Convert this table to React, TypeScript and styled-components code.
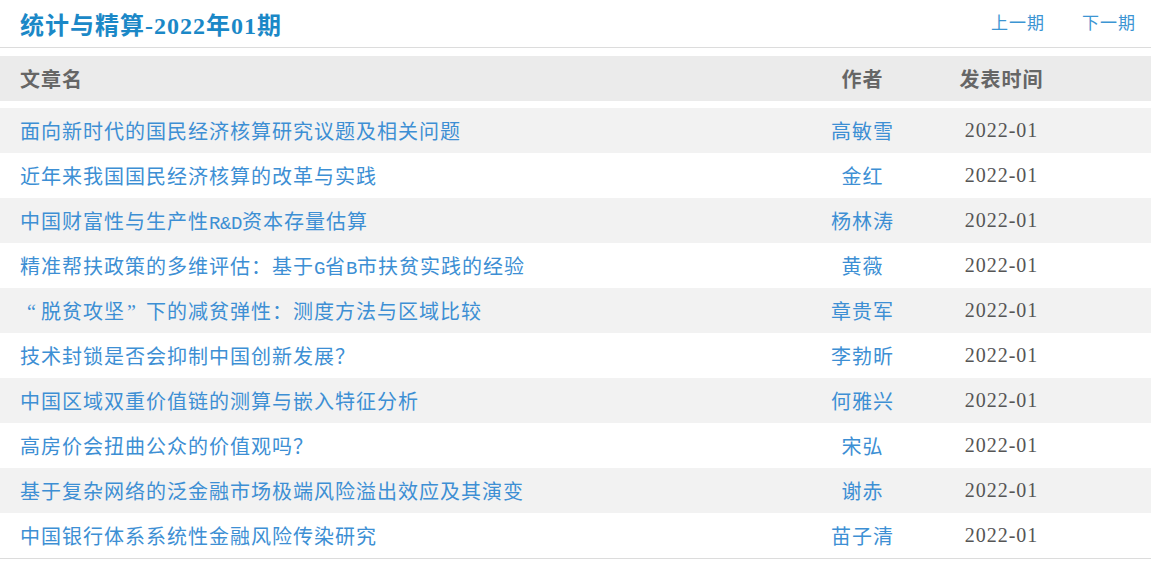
import styled, { createGlobalStyle } from "styled-components";

const GlobalStyle = createGlobalStyle`
  body {
    margin: 0;
    background: #ffffff;
    font-family: "Liberation Serif", "Noto Sans CJK SC", serif;
  }
`;

const articles = [
  { title: "面向新时代的国民经济核算研究议题及相关问题", author: "高敏雪" },
  { title: "近年来我国国民经济核算的改革与实践", author: "金红" },
  { title: "中国财富性与生产性R&D资本存量估算", author: "杨林涛" },
  { title: "精准帮扶政策的多维评估：基于G省B市扶贫实践的经验", author: "黄薇" },
  { title: "“脱贫攻坚”下的减贫弹性：测度方法与区域比较", author: "章贵军" },
  { title: "技术封锁是否会抑制中国创新发展？", author: "李勃昕" },
  { title: "中国区域双重价值链的测算与嵌入特征分析", author: "何雅兴" },
  { title: "高房价会扭曲公众的价值观吗？", author: "宋弘" },
  { title: "基于复杂网络的泛金融市场极端风险溢出效应及其演变", author: "谢赤" },
  { title: "中国银行体系系统性金融风险传染研究", author: "苗子清" },
];

// latin letters are half width and curly quotes full width in the original font
function renderTitle(text: string) {
  return text.split(/([A-Za-z&]+|[“”])/).map((part, i) => {
    if (!part) return null;
    if (part === "“") return <Quote key={i} $open>{part}</Quote>;
    if (part === "”") return <Quote key={i}>{part}</Quote>;
    if (/^[A-Za-z&]+$/.test(part)) return <Latin key={i}>{part}</Latin>;
    return part;
  });
}

function App() {
  return (
    <>
      <GlobalStyle />
      <Page lang="zh-CN">
        <TitleBar>
          <PageTitle>统计与精算-2022年01期</PageTitle>
          <Nav>
            <NavLink href="#">上一期</NavLink>
            <NavLink href="#">下一期</NavLink>
          </Nav>
        </TitleBar>
        <HeadRow>
          <HeadCell>文章名</HeadCell>
          <HeadCell $center>作者</HeadCell>
          <HeadCell $center>发表时间</HeadCell>
        </HeadRow>
        <List>
          {articles.map((a, i) => (
            <Row key={i} $striped={i % 2 === 0}>
              <TitleCell href="#">{renderTitle(a.title)}</TitleCell>
              <AuthorCell>{a.author}</AuthorCell>
              <DateCell>2022-01</DateCell>
            </Row>
          ))}
        </List>
      </Page>
    </>
  );
}

export default App;

const Page = styled.div`
  width: 1151px;
`;

const TitleBar = styled.div`
  height: 47px;
  display: flex;
  align-items: center;
  justify-content: space-between;
  padding: 0 15px 0 20px;
  border-bottom: 1px solid #dcdcdc;
`;

const PageTitle = styled.h1`
  margin: 0;
  font-size: 24px;
  font-weight: 700;
  letter-spacing: 1px;
  color: #1b88c7;
`;

const Nav = styled.div`
  display: flex;
  gap: 37px;
  padding-bottom: 4px;
`;

const NavLink = styled.a`
  font-size: 17px;
  letter-spacing: 1px;
  color: #3c95d3;
  text-decoration: none;
`;

const HeadRow = styled.div`
  margin-top: 8px;
  height: 45px;
  display: grid;
  grid-template-columns: 800px 125px 153px 1fr;
  align-items: center;
  background: #ebebeb;
`;

const HeadCell = styled.div<{ $center?: boolean }>`
  padding-left: ${(p) => (p.$center ? "0" : "20px")};
  text-align: ${(p) => (p.$center ? "center" : "left")};
  font-size: 20px;
  font-weight: 700;
  letter-spacing: 1px;
  color: #666666;
`;

const List = styled.div`
  margin-top: 7px;
  border-bottom: 1px solid #dcdcdc;
`;

const Row = styled.div<{ $striped: boolean }>`
  height: 45px;
  display: grid;
  grid-template-columns: 800px 125px 153px 1fr;
  align-items: center;
  background: ${(p) => (p.$striped ? "#f2f2f2" : "#ffffff")};
`;

const TitleCell = styled.a`
  padding-left: 20px;
  font-size: 20px;
  letter-spacing: 1px;
  color: #3d8fd4;
  text-decoration: none;
  white-space: nowrap;
`;

const Latin = styled.span`
  font-family: "Liberation Mono", monospace;
  font-size: 19px;
  letter-spacing: -0.4px;
`;

const Quote = styled.span<{ $open?: boolean }>`
  display: inline-block;
  width: 21px;
  text-align: ${(p) => (p.$open ? "right" : "left")};
  padding: ${(p) => (p.$open ? "0 4px 0 0" : "0 0 0 2px")};
  box-sizing: border-box;
`;

const AuthorCell = styled.div`
  text-align: center;
  font-size: 20px;
  letter-spacing: 1px;
  color: #3d8fd4;
`;

const DateCell = styled.div`
  text-align: center;
  font-size: 20px;
  letter-spacing: 1px;
  color: #555555;
`;
